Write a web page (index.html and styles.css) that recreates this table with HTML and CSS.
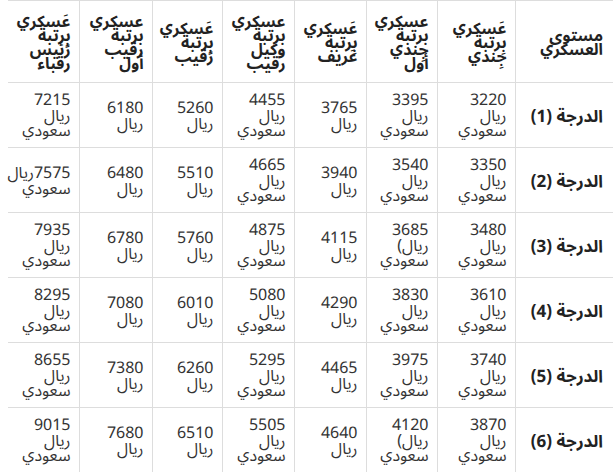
FILE: index.html
```html
<!DOCTYPE html>
<html lang="ar">
<head>
<meta charset="utf-8">
<title>رواتب العسكريين</title>
<link rel="stylesheet" href="styles.css">
</head>
<body>
<table class="salary" dir="rtl">
  <colgroup>
    <col class="c-level">
    <col class="c1"><col class="c2"><col class="c3"><col class="c4"><col class="c5"><col class="c6"><col class="c7">
  </colgroup>
  <thead>
    <tr>
      <th>مستوى العسكري</th>
      <th>عَسكري بِرتبة جِندي</th>
      <th>عسكري برتبة جِندي أول</th>
      <th>عَسكري بِرتبة عَريف</th>
      <th>عسكري برتبة وكيل رقيب</th>
      <th>عَسكري بِرتبة رَقيب</th>
      <th>عسكري برتبة رقيب أول</th>
      <th>عَسكري بِرتبة رَئيس رقباء</th>
    </tr>
  </thead>
  <tbody>
    <tr><td class="lvl">الدرجة (1)</td><td>3220 ريال سعودي</td><td>3395 ريال سعودي</td><td>3765 ريال</td><td>4455 ريال سعودي</td><td>5260 ريال</td><td>6180 ريال</td><td>7215 ريال سعودي</td></tr>
    <tr><td class="lvl">الدرجة (2)</td><td>3350 ريال سعودي</td><td>3540 ريال سعودي</td><td>3940 ريال</td><td>4665 ريال سعودي</td><td>5510 ريال</td><td>6480 ريال</td><td>7575ريال سعودي</td></tr>
    <tr><td class="lvl">الدرجة (3)</td><td>3480 ريال سعودي</td><td>3685 ريال) سعودي</td><td>4115 ريال</td><td>4875 ريال سعودي</td><td>5760 ريال</td><td>6780 ريال</td><td>7935 ريال سعودي</td></tr>
    <tr><td class="lvl">الدرجة (4)</td><td>3610 ريال سعودي</td><td>3830 ريال سعودي</td><td>4290 ريال</td><td>5080 ريال سعودي</td><td>6010 ريال</td><td>7080 ريال</td><td>8295 ريال سعودي</td></tr>
    <tr><td class="lvl">الدرجة (5)</td><td>3740 ريال سعودي</td><td>3975 ريال سعودي</td><td>4465 ريال</td><td>5295 ريال سعودي</td><td>6260 ريال</td><td>7380 ريال</td><td>8655 ريال سعودي</td></tr>
    <tr><td class="lvl">الدرجة (6)</td><td>3870 ريال سعودي</td><td>4120 ريال) سعودي</td><td>4640 ريال</td><td>5505 ريال سعودي</td><td>6510 ريال</td><td>7680 ريال</td><td>9015 ريال سعودي</td></tr>
  </tbody>
</table>
</body>
</html>
```

FILE: styles.css
```css
html, body {
  margin: 0;
  padding: 0;
  background: #ffffff;
  overflow: hidden;
}
body {
  padding-left: 8px;
  font-family: "Noto Sans Arabic UI", "Noto Sans Arabic", "DejaVu Sans", sans-serif;
  color: #333333;
}
.salary {
  border-collapse: collapse;
  table-layout: fixed;
  width: 605px;
  font-size: 16px;
}
.c-level { width: 98px; }
.c1 { width: 78px; }
.c2 { width: 71px; }
.c3 { width: 72px; }
.c4 { width: 72px; }
.c5 { width: 70px; }
.c6 { width: 73px; }
.c7 { width: 71px; }
.salary th,
.salary td {
  border: 1px solid #dddddd;
  text-align: right;
  vertical-align: middle;
  padding: 9px 8px 8px 8px;
}
.salary tr > :last-child { border-left: none; }
.salary tr > :first-child {
  border-right: none;
  padding-right: 10px;
}
.salary th {
  height: 65px;
  padding-top: 8px;
  padding-bottom: 8px;
  font-size: 16px;
  line-height: 14px;
  font-weight: bold;
  color: #222222;
}
.salary td {
  line-height: 15.5px;
  height: 47px;
}
.salary td.lvl {
  font-weight: bold;
  font-size: 17px;
  color: #222222;
}
```
